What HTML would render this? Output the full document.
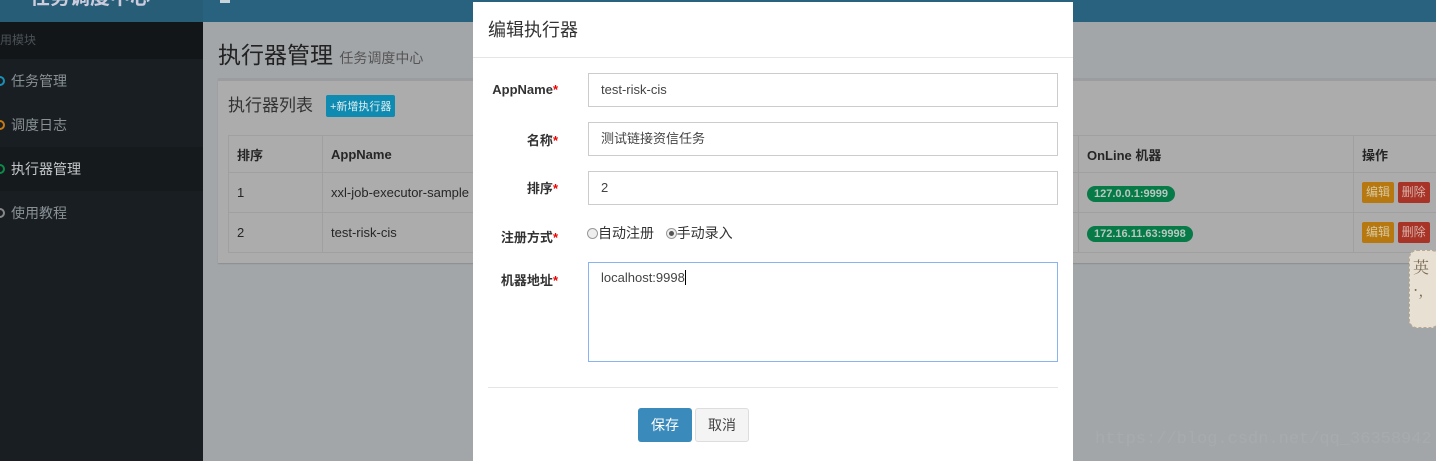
<!DOCTYPE html>
<html><head><meta charset="utf-8"><style>
*{box-sizing:border-box;margin:0;padding:0}
html,body{width:1436px;height:461px;overflow:hidden}
body{position:relative;background:#a2a6a9;font-family:"Liberation Sans","Noto Sans CJK SC",sans-serif;font-size:14px;color:#333}
.hdr{position:absolute;left:0;top:0;width:1436px;height:22px;background:#29627f}
.logo{position:absolute;left:0;top:0;width:203px;height:22px;background:#285d78;color:#ccd;font-size:20px;font-weight:bold;line-height:0;padding-left:30px}
.side{position:absolute;left:0;top:22px;width:203px;height:439px;background:#181e22}
.side .cap{height:37px;background:#121619;color:#4a5258;font-size:12px;line-height:37px}
.side .it{height:44px;line-height:44px;color:#8a9196;font-size:14px;padding-left:11px;position:relative}
.side .it i{position:absolute;left:-5px;top:17px;width:10px;height:10px;border-radius:50%;border:2px solid}
.side .act{background:#151a1d;color:#c5c8ca}
.ttl{position:absolute;left:218px;top:36px;font-size:23px;color:#222}
.ttl small{font-size:14px;color:#555}
.box{position:absolute;left:218px;top:78px;width:1230px;height:185px;background:#acacac;border-top:3px solid #9a9ca0;box-shadow:0 1px 1px rgba(0,0,0,.15)}
.box h3{position:absolute;left:10px;top:10px;font-size:17px;font-weight:normal;color:#333}
.addb{position:absolute;left:108px;top:14px;background:#0f8ab0;color:#e0eef2;font-size:11px;padding:3px 4px;border-radius:2px}
table{position:absolute;left:10px;top:54px;border-collapse:collapse;font-size:13px;color:#262626}
td,th{border:1px solid #a0a0a0;padding:0 8px;text-align:left}
th{height:37px;font-weight:bold}
td{height:40px}
.lb{background:#067a47;color:#b8c8c0;font-weight:bold;font-size:11px;padding:2px 7px;border-radius:9px}
.be,.bd{display:inline-block;font-size:12px;padding:0 4px;height:21px;line-height:21px;border-radius:2px}
.be{background:#b6780f;color:#d8c8a0}
.bd{background:#a83428;color:#d8b0a8}
.modal{position:absolute;left:473px;top:2px;width:600px;height:459px;background:#fff}
.modal .mh{height:56px;border-bottom:1px solid #e5e5e5;font-size:18px;line-height:56px;padding-left:15px;color:#333}
.lab{position:absolute;right:515px;font-weight:bold;font-size:13px;color:#333}
.lab b{color:#e00}
.inp{position:absolute;left:115px;width:470px;height:34px;border:1px solid #ccc;font-size:13px;padding:0 12px;line-height:32px;color:#444}
.rad{position:absolute;left:114px;top:221px;font-size:14px}
.rad span{display:inline-block;width:11px;height:11px;border-radius:50%;border:1px solid #999;background:#eee;vertical-align:-1px;position:relative}
.rad span.on:after{content:"";position:absolute;left:2px;top:2px;width:5px;height:5px;border-radius:50%;background:#555}
</style></head><body>
<div class="hdr"></div>
<div class="logo"><span style="position:relative;top:-2px">任务调度中心</span></div>
<div style="position:absolute;left:220px;top:0;width:10px;height:3px;background:#c8d4dc"></div>
<div class="side">
<div class="cap">用模块</div>
<div class="it"><i style="border-color:#1a8fb8"></i>任务管理</div>
<div class="it"><i style="border-color:#c77a12"></i>调度日志</div>
<div class="it act"><i style="border-color:#0d8a4a"></i>执行器管理</div>
<div class="it"><i style="border-color:#888"></i>使用教程</div>
</div>
<div class="ttl">执行器管理 <small>任务调度中心</small></div>
<div class="box"><h3>执行器列表</h3><span class="addb">+新增执行器</span>
<table>
<tr><th style="width:94px">排序</th><th style="width:756px">AppName</th><th style="width:275px">OnLine 机器</th><th style="width:90px">操作</th></tr>
<tr><td>1</td><td>xxl-job-executor-sample</td><td><span class="lb">127.0.0.1:9999</span></td><td><span class="be">编辑</span> <span class="bd">删除</span></td></tr>
<tr><td>2</td><td>test-risk-cis</td><td><span class="lb">172.16.11.63:9998</span></td><td><span class="be">编辑</span> <span class="bd">删除</span></td></tr>
</table></div>
<div style="position:absolute;left:1409px;top:250px;width:30px;height:78px;border-radius:8px;background:#e8e0d2;border:1px dashed #b9a88f;font-family:'Noto Serif CJK SC',serif;color:#7a6a55;font-size:16px;padding:4px 3px">英<br>·,</div>
<div style="position:absolute;left:1095px;top:430px;font-family:'Liberation Mono',monospace;font-size:17px;color:#a7abae">https://blog.csdn.net/qq_36358942</div>
<div class="modal">
<div class="mh">编辑执行器</div>
<div class="lab" style="top:80px">AppName<b>*</b></div>
<div class="inp" style="top:71px">test-risk-cis</div>
<div class="lab" style="top:128px">名称<b>*</b></div>
<div class="inp" style="top:120px">测试链接资信任务</div>
<div class="lab" style="top:176px">排序<b>*</b></div>
<div class="inp" style="top:169px">2</div>
<div class="lab" style="top:225px">注册方式<b>*</b></div>
<div class="rad"><span></span>自动注册 &nbsp; <span class="on"></span>手动录入</div>
<div class="lab" style="top:268px">机器地址<b>*</b></div>
<div class="inp" style="top:260px;height:100px;border-color:#8ab4f0;line-height:30px">localhost:9998<span style="border-left:1px solid #000"></span></div>
<div style="position:absolute;left:15px;top:385px;width:570px;border-top:1px solid #e5e5e5"></div>
<div style="position:absolute;left:165px;top:406px;width:54px;height:34px;background:#3a8bbb;border-radius:3px;color:#fff;text-align:center;line-height:34px;font-size:14px">保存</div>
<div style="position:absolute;left:222px;top:406px;width:54px;height:34px;background:#f4f4f4;border:1px solid #ddd;border-radius:3px;text-align:center;line-height:32px;font-size:14px;color:#444">取消</div>
</div>
</body></html>
